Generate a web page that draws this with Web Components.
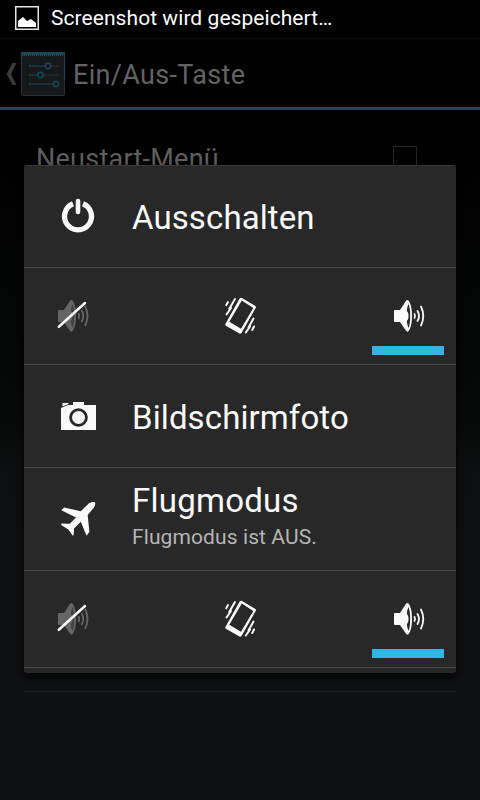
<!DOCTYPE html>
<html lang="de">
<head>
<meta charset="utf-8">
<title>Ein/Aus-Taste</title>
<style>
html, body { margin: 0; background: #000; }
body { font-family: Roboto, sans-serif; }
</style>
</head>
<body>
<power-screen></power-screen>
<script>
const define = (name, html) => {
  const template = document.createElement('template');
  template.innerHTML = html;
  customElements.define(name, class extends HTMLElement {
    constructor() {
      super();
      this.attachShadow({ mode: 'open' }).append(template.content.cloneNode(true));
    }
  });
};

define('status-bar', `
<style>
:host { display: flex; align-items: center; gap: 12px; box-sizing: border-box; height: 39px; padding: 0 0 3px 15px; border-bottom: 1px solid #0a0b0b; color: #fff; font-size: 21px; letter-spacing: .06px; white-space: nowrap; }
svg { flex: none; }
</style>
<svg width="24" height="24" viewBox="0 0 24 24"><rect x=".75" y=".75" width="22.5" height="22.5" fill="none" stroke="#e8e4e8" stroke-width="1.5"/><path d="M3 21V15L8 11L12 15L16 13L21 17V21Z" fill="#fff"/></svg>
<span><slot></slot></span>`);

define('action-bar', `
<style>
:host { display: flex; align-items: center; box-sizing: border-box; height: 71px; padding: 0 0 0 6px; border-bottom: 3px solid #17495c; color: #636363; font-size: 27px; letter-spacing: .32px; white-space: nowrap; }
svg { flex: none; }
span { margin-left: 8px; padding-top: 4px; }
</style>
<svg width="11" height="22" viewBox="0 0 11 22" style="margin-top:2px"><path d="M6.5 0H10.5L5 11L10.5 22H6.5L.5 11Z" fill="#3b3b3b"/></svg>
<svg width="44" height="44" viewBox="0 0 44 44" style="margin-left:4px;margin-top:2px"><rect x=".5" y=".5" width="43" height="43" rx="1" fill="#171819" stroke="#2b2e30"/><path d="M.5 2V30M43.500 2V28" stroke="#12475b" stroke-dasharray="6 2"/><path d="M0 0H44V3H0Z" fill="#17495c"/><path d="M1 3.500H43" stroke="#454b4e" stroke-dasharray="1 1"/><g stroke="#24282a" stroke-width="1.500"><path d="M30 14H38M22 23H38"/></g><g stroke="#15465a" stroke-width="1.500" fill="none"><path d="M8 14H24M8 23H16M8 32H32" stroke-dasharray="2 .6"/><circle cx="27" cy="14" r="2.700"/><circle cx="19.500" cy="23" r="2.700"/><circle cx="35" cy="32" r="2.700"/></g></svg>
<span><slot></slot></span>`);

define('check-setting', `
<style>
:host { display: flex; align-items: center; justify-content: space-between; box-sizing: border-box; height: 97px; margin: 0 24px; padding: 2px 39px 0 12px; color: #5e5e5e; font-size: 27px; letter-spacing: .25px; border-bottom: 1px solid #131414; }
i { box-sizing: border-box; width: 24px; height: 24px; border: 1px solid #262626; margin-top: -2px; }
</style>
<span><slot></slot></span><i></i>`);

define('settings-list', `
<style>
:host { display: block; flex: 1; }
div { height: 484px; margin: 0 24px; border-bottom: 1px solid #1b1c1e; }
</style>
<slot></slot><div></div>`);

define('menu-action', `
<style>
:host { display: flex; align-items: center; box-sizing: border-box; height: 103px; padding-left: 36px; gap: 36px; border-bottom: 1px solid #4b4b4b; color: #fafafa; font-size: 33px; white-space: nowrap; }
::slotted(svg) { flex: none; width: 36px; height: 36px; }
.t { display: flex; flex-direction: column; line-height: 38px; padding: var(--pad, 4px 0 0); }
::slotted(small) { font-size: 21px; line-height: 25px; color: #b5b5b5; margin-top: 5px; letter-spacing: .1px; }
</style>
<slot name="icon"></slot><div class="t"><slot></slot><slot name="detail"></slot></div>`);

define('sound-modes', `
<style>
:host { display: flex; justify-content: space-between; box-sizing: border-box; height: 97px; padding: 0 12px; border-bottom: 1px solid #4b4b4b; }
div { display: flex; flex-direction: column; align-items: center; justify-content: flex-end; width: 72px; padding-bottom: 9px; }
svg { width: 48px; height: 48px; }
i { width: 72px; height: 9px; margin-top: 6px; }
.on { background: #33b5e5; }
</style>
<div><svg viewBox="0 0 48 48"><g transform="translate(2 0)" fill="#656565"><path d="M8 19Q8 18 9 18H14L19.500 9.500Q22 6 24 11Q26 16 26 24Q26 32 24 36.500Q22 42 19.500 38L14 30H9Q8 30 8 29Z"/><path d="M22.500 12Q24.200 16 24.200 24T22.500 36Q21.300 34 20.800 29Q22.500 28 22.500 24T20.800 19Q21.300 14 22.500 12Z" fill="#404040"/><g fill="none" stroke="#656565" stroke-width="1.800"><path d="M28.500 21Q30 24 28.500 27M31.500 18Q35 24 31.500 30M35 14Q40 24 35 34"/></g></g><path d="M10.800 34.800L37 11" stroke="#fafafa" stroke-width="2.500" stroke-linecap="round"/></svg><i></i></div>
<div><svg viewBox="0 0 48 48"><path fill-rule="evenodd" d="M23.800 6.200Q25 5.500 26 6L39.400 14Q40.300 14.700 39.800 15.700L25.700 40.800Q24.800 42 23.500 41.600L9.800 33.800Q8.800 33 9.400 32ZM25.800 8.600L13.300 29.700L25 36.800L37.300 16Z" fill="#fafafa"/><path d="M19 7L13.200 17M12 10L10.200 13.200M15 16L10.500 22.500M37.500 26.500L32.500 35.500M38 34.500L36.200 38M34 34.500L29.800 40.500" stroke="#fafafa" stroke-width="2" stroke-linecap="round"/></svg><i></i></div>
<div><svg viewBox="0 0 48 48"><g transform="translate(2 0)"><path d="M8 19Q8 18 9 18H14L19.500 9.500Q22 6 24 11Q26 16 26 24Q26 32 24 36.500Q22 42 19.500 38L14 30H9Q8 30 8 29Z" fill="#fafafa"/><path d="M22.500 12Q24.200 16 24.200 24T22.500 36Q21.300 34 20.800 29Q22.500 28 22.500 24T20.800 19Q21.300 14 22.500 12Z" fill="#282828"/><g fill="none" stroke="#fafafa" stroke-width="1.800" stroke-linecap="round"><path d="M28.500 22Q29.500 24 28.500 26M31.500 19Q34.500 24 31.500 29M35 14.500Q39.500 24 35 33.500"/></g></g></svg><i class="on"></i></div>`);

define('power-menu', `
<style>
:host { position: absolute; left: 24px; top: 165px; width: 432px; height: 508px; box-sizing: border-box; background: #282828; border-radius: 3px; box-shadow: 0 3px 6px 1px rgba(0,0,0,.65), inset 0 1px 0 #383838; overflow: hidden; }
</style>
<slot></slot>`);

define('power-screen', `
<style>
:host { display: flex; flex-direction: column; position: relative; width: 480px; height: 800px; overflow: hidden; background: linear-gradient(#000 0 150px, #040605 290px, #080909 430px, #0e0f10 470px, #0f1012 640px); }
</style>
<status-bar>Screenshot wird gespeichert…</status-bar>
<action-bar>Ein/Aus-Taste</action-bar>
<settings-list><check-setting>Neustart-Menü</check-setting></settings-list>
<power-menu>
<menu-action style="letter-spacing:.1px"><svg slot="icon" viewBox="0 0 36 36"><path d="M13 5.800A13.500 13.500 0 1 0 23 5.800" fill="none" stroke="#fafafa" stroke-width="5.300"/><path d="M18 3V14" stroke="#fafafa" stroke-width="4.600" stroke-linecap="round"/></svg>Ausschalten</menu-action>
<sound-modes></sound-modes>
<menu-action style="letter-spacing:.1px"><svg slot="icon" viewBox="0 0 36 36"><path d="M1 10L8 7H13V4H24V7H36V32H1Z" fill="#fafafa"/><path d="M2.500 5H8.500V6L2.500 8.500Z" fill="#fafafa"/><circle cx="18.500" cy="19.500" r="7.900" fill="none" stroke="#282828" stroke-width="2.800"/></svg>Bildschirmfoto</menu-action>
<menu-action style="--pad:0 0 7px;letter-spacing:.25px"><svg slot="icon" viewBox="0 0 36 36"><path d="M29 2.300Q33 .2 35 1.200Q36 3.500 33.500 7L27.700 14L29.400 31L26.500 34.800L20.800 20.800L14 27.500L13.800 33.500L12.800 34.800L8.300 28.500L1.200 24L1.300 22.500L9.800 22.800L16 16.500L1.300 9.300L4 6.400L20.700 10.300Z" fill="#fafafa"/></svg>Flugmodus<small slot="detail">Flugmodus ist AUS.</small></menu-action>
<sound-modes></sound-modes>
</power-menu>`);
</script>
</body>
</html>
